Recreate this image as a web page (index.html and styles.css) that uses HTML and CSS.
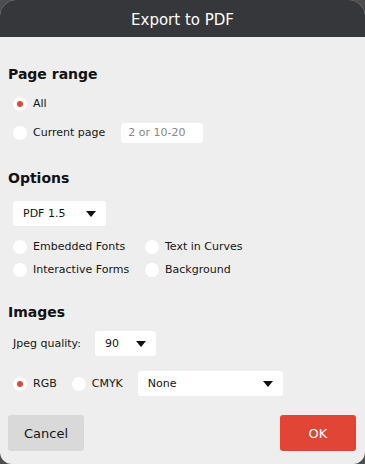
FILE: index.html
```html
<!DOCTYPE html>
<html lang="en">
<head>
  <meta charset="UTF-8" />
  <meta name="viewport" content="width=device-width, initial-scale=1.0"/>
  <title>Export to PDF</title>
  <link rel="stylesheet" href="styles.css">
</head>
<body>
  <div class="dialog">
    <div class="dialog-header">Export to PDF</div>

    <div class="dialog-body">
      <h3 class="section-title first">Page range</h3>
      <div class="radio-row">
        <span class="radio checked"></span>
        <span class="label">All</span>
      </div>
      <div class="radio-row">
        <span class="radio"></span>
        <span class="label">Current page</span>
        <div class="text-input">2 or 10-20</div>
      </div>

      <h3 class="section-title">Options</h3>
      <div class="select select-pdf">
        <span>PDF 1.5</span>
        <span class="arrow"></span>
      </div>
      <div class="check-grid">
        <div class="check-row"><span class="radio"></span><span class="label">Embedded Fonts</span></div>
        <div class="check-row"><span class="radio"></span><span class="label">Text in Curves</span></div>
        <div class="check-row"><span class="radio"></span><span class="label">Interactive Forms</span></div>
        <div class="check-row"><span class="radio"></span><span class="label">Background</span></div>
      </div>

      <h3 class="section-title">Images</h3>
      <div class="jpeg-row">
        <span class="label">Jpeg quality:</span>
        <div class="select select-quality">
          <span>90</span>
          <span class="arrow"></span>
        </div>
      </div>
      <div class="color-row">
        <span class="radio checked"></span>
        <span class="label">RGB</span>
        <span class="radio cmyk"></span>
        <span class="label">CMYK</span>
        <div class="select select-profile">
          <span>None</span>
          <span class="arrow"></span>
        </div>
      </div>
    </div>

    <div class="dialog-footer">
      <button class="btn-cancel">Cancel</button>
      <button class="btn-ok">OK</button>
    </div>
  </div>
</body>
</html>
```

FILE: styles.css
```css
body {
  margin: 0;
  background-color: #4d4d4f;
  font-family: 'DejaVu Sans', Verdana, sans-serif;
  color: #151515;
}

.dialog {
  width: 365px;
  height: 464px;
  background-color: #eeeeee;
  border-radius: 16px 16px 12px 12px;
  overflow: hidden;
  display: flex;
  flex-direction: column;
}

.dialog-header {
  height: 37px;
  background-color: #36373a;
  color: white;
  font-size: 15px;
  line-height: 41px;
  text-align: center;
}

.dialog-body {
  padding: 0 8px;
}

.section-title {
  margin: 22px 0 0;
  font-size: 14px;
  line-height: 18px;
  font-weight: bold;
  color: #111;
}

.section-title.first {
  margin-top: 28px;
}

.label {
  font-size: 11px;
  color: #151515;
}

.radio {
  width: 14px;
  height: 14px;
  border-radius: 50%;
  background-color: white;
  display: inline-flex;
  align-items: center;
  justify-content: center;
  flex-shrink: 0;
}

.radio.checked::after {
  content: "";
  width: 6px;
  height: 6px;
  border-radius: 50%;
  background-color: #e04535;
}

.radio-row {
  height: 29px;
  display: flex;
  align-items: center;
  gap: 6px;
  padding-left: 5px;
}

.section-title.first + .radio-row {
  margin-top: 6px;
}

.text-input {
  width: 75px;
  height: 20px;
  margin-left: 10px;
  padding-left: 7px;
  background-color: white;
  border-radius: 3px;
  font-size: 11px;
  line-height: 20px;
  color: #888;
}

.select {
  height: 25px;
  background-color: white;
  border-radius: 3px;
  padding: 0 10px;
  box-sizing: border-box;
  display: flex;
  align-items: center;
  justify-content: space-between;
  font-size: 11px;
}

.arrow {
  width: 0;
  height: 0;
  border-left: 5.5px solid transparent;
  border-right: 5.5px solid transparent;
  border-top: 6px solid #111;
}

.select-pdf {
  width: 93px;
  margin: 14px 0 0 5px;
}

.check-grid {
  margin-top: 9px;
  padding-left: 5px;
  display: grid;
  grid-template-columns: 132px 1fr;
}

.check-row {
  height: 23px;
  display: flex;
  align-items: center;
  gap: 6px;
}

.jpeg-row {
  margin-top: 10px;
  padding-left: 5px;
  display: flex;
  align-items: center;
}

.select-quality {
  width: 61px;
  margin-left: 14px;
}

.color-row {
  margin-top: 15px;
  padding-left: 5px;
  display: flex;
  align-items: center;
  gap: 6px;
}

.radio.cmyk {
  margin-left: 9px;
}

.select-profile {
  width: 145px;
  margin-left: 9px;
}

.dialog-footer {
  margin-top: auto;
  padding: 0 9px 13px 8px;
  display: flex;
  justify-content: space-between;
}

.btn-cancel, .btn-ok {
  width: 76px;
  height: 36px;
  border: none;
  border-radius: 3px;
  font-family: 'DejaVu Sans', Verdana, sans-serif;
  font-size: 13px;
  cursor: pointer;
}

.btn-cancel {
  background-color: #d9d9d9;
  color: #151515;
}

.btn-ok {
  background-color: #e04535;
  color: white;
}
```
